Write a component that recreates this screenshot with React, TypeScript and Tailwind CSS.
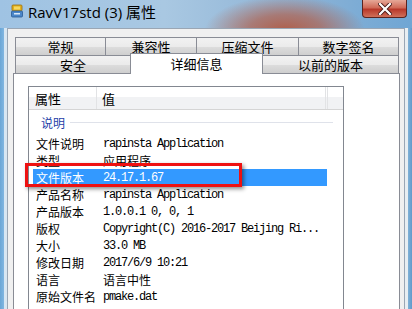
import React from 'react';
import { clsx } from 'clsx';

type Row = { k: string; v: string; mono?: boolean; selected?: boolean };

const rows: Row[] = [
  { k: '文件说明', v: 'rapinsta Application', mono: true },
  { k: '类型', v: '应用程序' },
  { k: '文件版本', v: '24.17.1.67', mono: true, selected: true },
  { k: '产品名称', v: 'rapinsta Application', mono: true },
  { k: '产品版本', v: '1.0.0.1 0, 0, 1', mono: true },
  { k: '版权', v: 'Copyright(C) 2016-2017 Beijing Ri...', mono: true },
  { k: '大小', v: '33.0 MB', mono: true },
  { k: '修改日期', v: '2017/6/9 10:21', mono: true },
  { k: '语言', v: '语言中性' },
  { k: '原始文件名', v: 'pmake.dat', mono: true },
];

const cjk = "font-['Noto_Sans_CJK_SC',sans-serif]";
const mono = "font-['Liberation_Mono','Noto_Sans_CJK_SC',monospace] tracking-[-1.2px]";

function Tab({ label, className }: { label: string; className?: string }) {
  return (
    <div
      className={clsx(
        'flex items-center justify-center h-[18px] border border-[#898c95] border-b-0',
        'bg-[linear-gradient(180deg,#f2f2f2_0%,#ebebeb_50%,#dddddd_51%,#cfcfcf_100%)]',
        'text-[13px] leading-none text-black',
        cjk,
        className
      )}
    >
      {label}
    </div>
  );
}

function AppIcon() {
  return (
    <svg width="12" height="14" viewBox="0 0 12 14">
      <rect x="1" y="1" width="10" height="6" rx="1" fill="#e0b020" stroke="#9a7010" strokeWidth="0.8" />
      <rect x="3" y="2.5" width="6" height="3" fill="#f6d860" />
      <rect x="0.5" y="7" width="11" height="6" rx="1" fill="#4a86c8" stroke="#2a5a96" strokeWidth="0.8" />
      <rect x="3" y="9" width="6" height="1.5" fill="#d8e8f8" />
    </svg>
  );
}

export default function App() {
  return (
    <div className="relative w-[412px] h-[309px] overflow-hidden bg-[radial-gradient(ellipse_80px_34px_at_285px_30px,#b0604c_0%,rgba(176,96,76,0.7)_45%,rgba(176,96,76,0)_100%),linear-gradient(90deg,#9fc3e3_0%,#a9c8e2_40%,#8fb4d6_70%,#6fa6d4_100%)]">
      {/* Title bar */}
      <div className="flex items-start h-[28px]">
        <div className="pl-[11px] pt-[4px]">
          <AppIcon />
        </div>
        <div className={clsx('pl-[5px] pt-[2px] text-[15px] leading-[20px] text-black', "font-['Open_Sans','Noto_Sans_CJK_SC',sans-serif]")}>
          RavV17std (3) 属性
        </div>
        <div className="ml-auto mr-[5px] w-[45px] h-[18px] rounded-b-[4px] border border-t-0 border-[#5a2420] bg-[linear-gradient(180deg,#e6a898_0%,#d06a58_45%,#b8382a_55%,#d0705a_100%)] flex items-center justify-center">
          <svg width="14" height="12" viewBox="0 0 14 12">
            <path d="M2 1 L12 11 M12 1 L2 11" stroke="#4a1a18" strokeWidth="4" strokeLinecap="square" />
            <path d="M2 1 L12 11 M12 1 L2 11" stroke="#ffffff" strokeWidth="2.2" strokeLinecap="square" />
          </svg>
        </div>
      </div>

      {/* Body */}
      <div className="flex h-[281px]">
        <div className="w-[7px] bg-[linear-gradient(90deg,#6aa6d6_0%,#7fb5e0_55%,#d7e6f2_60%,#d7e6f2_100%)]" />
        <div className="flex-1 bg-[#f0f0f0] border-l border-t border-r border-[#9aa6b4] pl-[5px] pr-[4px] pt-[8px] flex flex-col">
          {/* Tabs */}
          <div className="pl-[2px] pr-[1px]">
            <div className="flex">
              <Tab label="常规" className="w-[91px]" />
              <Tab label="兼容性" className="w-[92px] -ml-px" />
              <Tab label="压缩文件" className="w-[103px] -ml-px" />
              <Tab label="数字签名" className="flex-1 -ml-px" />
            </div>
            <div className="flex items-end h-[18px]">
              <Tab label="安全" className="w-[116px]" />
              <div className={clsx('relative z-10 w-[133px] h-[21px] -mb-px -ml-px bg-white border border-[#898c95] border-b-0 flex items-center justify-center text-[13px] leading-none pb-[1px]', cjk)}>
                详细信息
              </div>
              <Tab label="以前的版本" className="flex-1 -ml-px" />
            </div>
          </div>

          {/* Tab page */}
          <div className="flex-1 bg-white border border-b-0 border-[#898c95] pt-[12px] pl-[14px] pr-[55px]">
            <div className="h-full border border-b-0 border-[#828790] bg-white">
              {/* Header */}
              <div className={clsx('flex h-[23px] border-b border-[#d5d5d5] bg-[linear-gradient(180deg,#ffffff_0%,#ffffff_45%,#f1f2f4_46%,#f1f2f4_100%)] text-[13px] leading-none', cjk)}>
                <div className="w-[68px] flex items-center pl-[6px] border-r border-[#e2e3e5]">属性</div>
                <div className="w-[229px] flex items-center pl-[5px] border-r border-[#e2e3e5]">值</div>
                <div className="w-[2px] border-r border-[#e2e3e5]" />
              </div>

              {/* Group */}
              <div className="flex items-center h-[25px] pl-[12px] pr-[10px]">
                <span className={clsx('text-[12px] leading-none text-[#1e40a8]', cjk)}>说明</span>
                <div className="flex-1 h-px bg-[#dfe2ea] ml-[5px]" />
              </div>

              {/* Rows */}
              <div className="flex flex-col">
                {rows.map((r) => (
                  <div
                    key={r.k}
                    className={clsx(
                      'flex items-center h-[17px] ml-[4px] w-[294px] text-[12px] leading-none',
                      r.selected ? 'bg-[#3399ff] text-white' : 'text-black'
                    )}
                  >
                    <div className={clsx('w-[70px] pl-[3px] whitespace-nowrap', cjk)}>{r.k}</div>
                    <div className={clsx('whitespace-nowrap', r.mono ? mono : cjk)}>{r.v}</div>
                  </div>
                ))}
              </div>
            </div>
          </div>
        </div>
        <div className="w-[7px] bg-[linear-gradient(90deg,#e8eef2_0%,#e8eef2_40%,#7fb0d6_45%,#5f9acb_100%)]" />
      </div>

      {/* Red annotation box */}
      <div className="absolute left-[25px] top-[163px] w-[217px] h-[24px] border-[3px] border-[#ee1111] shadow-[2px_2px_4px_rgba(0,0,0,0.45)]" />
    </div>
  );
}
